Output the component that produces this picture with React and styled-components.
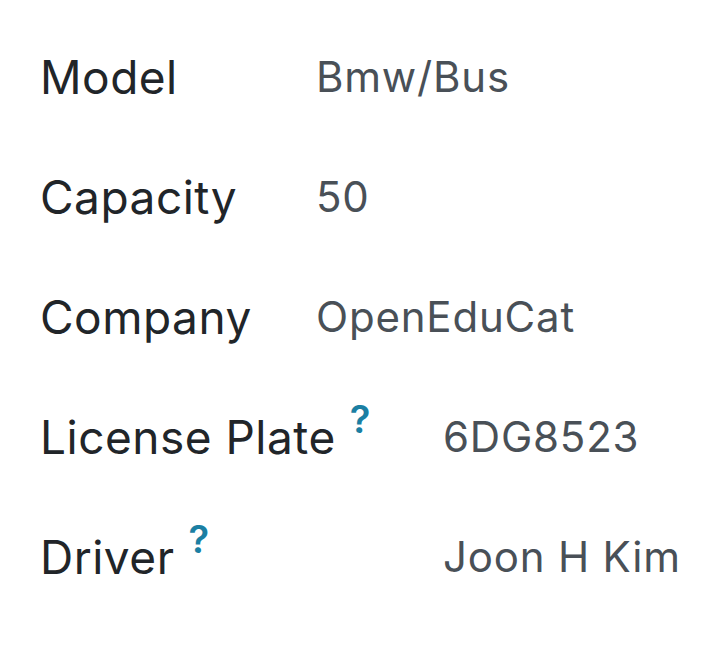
import React from 'react'
import styled, { createGlobalStyle } from 'styled-components'

const GlobalStyle = createGlobalStyle`
  body {
    margin: 0;
    background: #ffffff;
    font-family: Inter, "Noto Sans", sans-serif;
  }
`

const Sheet = styled.div`
  width: 708px;
  height: 648px;
  padding: 17px 0 0 40px;
  box-sizing: border-box;
  display: flex;
  flex-direction: column;
`

const Group = styled.div`
  display: grid;
  grid-template-columns: ${p => p.labelWidth}px 1fr;
  grid-auto-rows: 120px;
`

const Label = styled.div`
  display: flex;
  align-items: flex-start;
  color: #212529;
  font-size: 46px;
  letter-spacing: 0.5px;
  line-height: 120px;
  white-space: nowrap;
`

const Help = styled.sup`
  color: #1b7fa3;
  font-size: 38px;
  font-weight: 600;
  line-height: 1;
  margin-left: 14px;
  margin-top: 23px;
`

const Value = styled.div`
  color: #495057;
  font-size: 42px;
  letter-spacing: 0.8px;
  line-height: 120px;
  white-space: nowrap;
`

const first = [
  ['Model', 'Bmw/Bus'],
  ['Capacity', '50'],
  ['Company', 'OpenEduCat'],
]

const second = [
  ['License Plate', '6DG8523'],
  ['Driver', 'Joon H Kim'],
]

const App = () => {
  return (
    <>
      <GlobalStyle />
      <Sheet>
        <Group labelWidth={276}>
          {first.map(([l, v]) => (
            <React.Fragment key={l}>
              <Label>{l}</Label>
              <Value>{v}</Value>
            </React.Fragment>
          ))}
        </Group>
        <Group labelWidth={403}>
          {second.map(([l, v]) => (
            <React.Fragment key={l}>
              <Label>
                {l}
                <Help>?</Help>
              </Label>
              <Value>{v}</Value>
            </React.Fragment>
          ))}
        </Group>
      </Sheet>
    </>
  )
}

export default App
